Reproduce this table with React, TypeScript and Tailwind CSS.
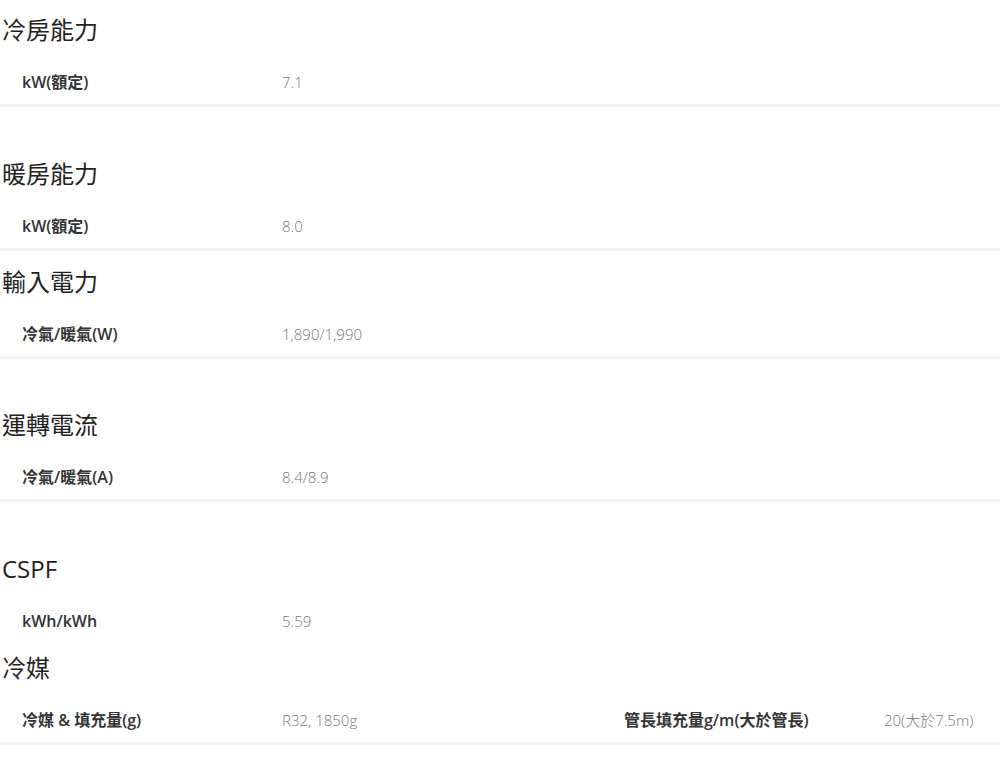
import React from 'react';

type Row = { label: string; value: string; label2?: string; value2?: string };

type Section = {
  title: string;
  rows: Row[];
  gap: string; // space above heading
  line?: boolean;
};

const sections: Section[] = [
  { title: '冷房能力', rows: [{ label: 'kW(額定)', value: '7.1' }], gap: 'mt-[12px]', line: true },
  { title: '暖房能力', rows: [{ label: 'kW(額定)', value: '8.0' }], gap: 'mt-[49px]', line: true },
  { title: '輸入電力', rows: [{ label: '冷氣/暖氣(W)', value: '1,890/1,990' }], gap: 'mt-[13px]', line: true },
  { title: '運轉電流', rows: [{ label: '冷氣/暖氣(A)', value: '8.4/8.9' }], gap: 'mt-[48px]', line: true },
  { title: 'CSPF', rows: [{ label: 'kWh/kWh', value: '5.59' }], gap: 'mt-[49px]', line: false },
  {
    title: '冷媒',
    rows: [{ label: '冷媒 & 填充量(g)', value: 'R32, 1850g', label2: '管長填充量g/m(大於管長)', value2: '20(大於7.5m)' }],
    gap: 'mt-[4px]',
    line: true,
  },
];

const font = { fontFamily: '"Open Sans", "Noto Sans CJK TC", sans-serif' };

export default function App() {
  return (
    <div className="w-[1000px] h-[774px] overflow-hidden bg-white" style={font}>
      {sections.map((s) => (
        <div key={s.title} className={s.gap}>
          <h2 className="pl-[2px] text-[24px] leading-[36px] text-[#222] font-normal">{s.title}</h2>
          {s.rows.map((r) => (
            <div
              key={r.label}
              className={
                'mt-[12px] h-[47px] grid grid-cols-[260px_342px_260px_1fr] items-center pl-[22px] border-b-[3px] ' +
                (s.line ? 'border-[#f3f3f3]' : 'border-transparent')
              }
            >
              <span className="text-[16px] font-semibold text-[#333]">{r.label}</span>
              <span className="text-[15px] font-light text-[#777]">{r.value}</span>
              <span className="text-[16px] font-semibold text-[#333]">{r.label2}</span>
              <span className="text-[15px] font-light text-[#777]">{r.value2}</span>
            </div>
          ))}
        </div>
      ))}
    </div>
  );
}
